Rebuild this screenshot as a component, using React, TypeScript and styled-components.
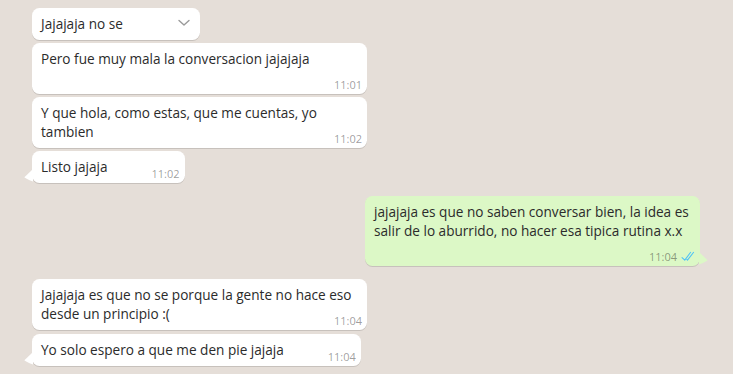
import React from "react";
import styled, { createGlobalStyle, css } from "styled-components";

const Global = createGlobalStyle`
  html, body { margin: 0; padding: 0; }
  body {
    background: #e5ded8;
    font-family: "Open Sans", "Noto Sans", sans-serif;
    -webkit-font-smoothing: antialiased;
  }
`;

const Chat = styled.div`
  width: 733px;
  height: 374px;
  box-sizing: border-box;
  padding: 8px 33px 0 32px;
  display: flex;
  flex-direction: column;
  overflow: hidden;
  background: #e5ded8;
`;

const Row = styled.div<{ $out?: boolean; $gap: number }>`
  display: flex;
  justify-content: ${(p) => (p.$out ? "flex-end" : "flex-start")};
  margin-top: ${(p) => p.$gap}px;
`;

const Bubble = styled.div<{ $out?: boolean }>`
  position: relative;
  box-sizing: border-box;
  max-width: 335px;
  padding: 6px 7px 6px 9px;
  border-radius: 7.5px;
  background: ${(p) => (p.$out ? "#dcf8c6" : "#ffffff")};
  box-shadow: 0 1px 0.5px rgba(0, 0, 0, 0.13);
  color: #2b2b2b;
`;

const Text = styled.div`
  display: flow-root;
  font-size: 13.6px;
  line-height: 19px;
  white-space: pre-wrap;
  word-wrap: break-word;
`;

const Meta = styled.span<{ $hidden?: boolean }>`
  float: right;
  margin: 9px -2px -4px 44px;
  display: inline-flex;
  align-items: center;
  gap: 4px;
  font-size: 11px;
  line-height: 15px;
  color: rgba(0, 0, 0, 0.4);
  ${(p) =>
    p.$hidden &&
    css`
      visibility: hidden;
    `}
`;

const MenuButton = styled.span`
  position: absolute;
  top: 8px;
  right: 9px;
  width: 14px;
  height: 14px;
  display: flex;
  align-items: center;
  justify-content: center;
  color: #9a9a9a;
`;

const Tail = styled.span<{ $out?: boolean }>`
  position: absolute;
  bottom: 3px;
  width: 9px;
  height: 14px;
  display: block;
  ${(p) =>
    p.$out
      ? css`
          right: -8px;
        `
      : css`
          left: -8px;
        `}
`;

const Chevron = () => (
  <svg width="12" height="8" viewBox="0 0 12 8">
    <polyline
      points="1,1.5 6,6 11,1.5"
      fill="none"
      stroke="currentColor"
      strokeWidth="1.4"
      strokeLinecap="round"
      strokeLinejoin="round"
    />
  </svg>
);

const DoubleCheck = () => (
  <svg width="14" height="11" viewBox="0 0 16 12">
    <path
      d="M1.2 7.2 L4.3 10.2 L11 1.2"
      fill="none"
      stroke="#4fc3f7"
      strokeWidth="1.2"
      strokeLinecap="round"
      strokeLinejoin="round"
    />
    <path
      d="M6.6 9.4 L7.4 10.2 L14.4 1.2"
      fill="none"
      stroke="#4fc3f7"
      strokeWidth="1.2"
      strokeLinecap="round"
      strokeLinejoin="round"
    />
  </svg>
);

const TailShape = ({ out }: { out?: boolean }) => (
  <Tail $out={out}>
    <svg width="9" height="14" viewBox="0 0 9 14">
      {out ? (
        <path d="M0 0 L8.6 8.2 Q7.5 9.6 0 12.5 Z" fill="#dcf8c6" />
      ) : (
        <path d="M9 0 L0.4 8.2 Q1.5 9.6 9 12.5 Z" fill="#ffffff" />
      )}
    </svg>
  </Tail>
);

type Msg = {
  text: string;
  time: string;
  out?: boolean;
  gap: number;
  tail?: boolean;
  menu?: boolean;
};

const messages: Msg[] = [
  { text: "Jajajaja no se", time: "11:01", gap: 0, menu: true },
  { text: "Pero fue muy mala la conversacion jajajaja", time: "11:01", gap: 3 },
  { text: "Y que hola, como estas, que me cuentas, yo tambien", time: "11:02", gap: 3 },
  { text: "Listo jajaja", time: "11:02", gap: 3, tail: true },
  {
    text: "jajajaja es que no saben conversar bien, la idea es salir de lo aburrido, no hacer esa tipica rutina x.x",
    time: "11:04",
    out: true,
    gap: 13,
    tail: true,
  },
  { text: "Jajajaja es que no se porque la gente no hace eso desde un principio :(", time: "11:04", gap: 13 },
  { text: "Yo solo espero a que me den pie jajaja", time: "11:04", gap: 4, tail: true },
];

export default function App() {
  return (
    <>
      <Global />
      <Chat>
        {messages.map((m, i) => (
          <Row key={i} $out={m.out} $gap={m.gap}>
            <Bubble $out={m.out}>
              {m.tail && <TailShape out={m.out} />}
              <Text>
                {m.text}
                <Meta $hidden={m.menu}>
                  {m.time}
                  {m.out && <DoubleCheck />}
                </Meta>
              </Text>
              {m.menu && (
                <MenuButton>
                  <Chevron />
                </MenuButton>
              )}
            </Bubble>
          </Row>
        ))}
      </Chat>
    </>
  );
}
